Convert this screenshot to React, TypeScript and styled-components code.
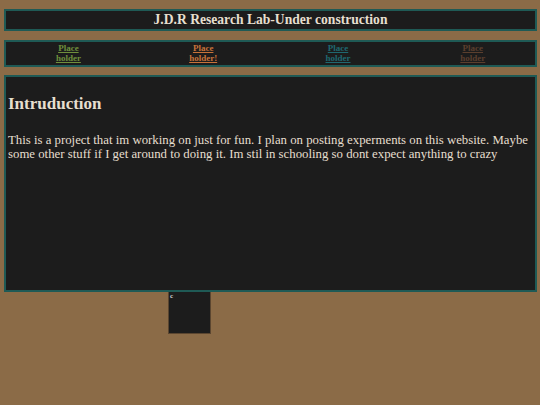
import styled, { createGlobalStyle } from 'styled-components';

const Global = createGlobalStyle`
  html, body {
    margin: 0;
    padding: 0;
    background-color: #8b6b47;
  }
  body {
    font-family: "Liberation Serif", "Times New Roman", serif;
    color: #e6dfcf;
  }
`

const Page = styled.div`
  padding: 9px 3px 0 4px;
  display: flex;
  flex-direction: column;
`
const Panel = styled.div`
  background-color: #1c1c1c;
  border: 2px solid #1f5a55;
  box-sizing: border-box;
`
const Header = styled(Panel)`
  height: 22px;
  display: flex;
  align-items: center;
  justify-content: center;
  font-weight: bold;
  font-size: 13.6px;
`
const Nav = styled(Panel)`
  margin-top: 9px;
  height: 27px;
  display: flex;
  align-items: center;
`
const NavRow = styled.div`
  margin-left: -5px;
  display: grid;
  grid-template-columns: repeat(4, 134.8px);
  align-items: center;
`
const NavLink = styled.a<{ $color: string }>`
  justify-self: center;
  text-align: center;
  font-size: 9px;
  line-height: 10px;
  font-weight: bold;
  color: ${(p) => p.$color};
  text-decoration: underline;
  width: 30px;
  margin-top: -1px;
`
const Main = styled(Panel)`
  margin-top: 8px;
  height: 217px;
  padding: 0 2px;
`
const Title = styled.h1`
  margin: 17px 0 0;
  font-size: 17px;
  line-height: 20px;
`
const Text = styled.p`
  margin: 19px 0 0;
  font-size: 12.8px;
  line-height: 14px;
`
const Below = styled.div`
  padding-left: 164px;
`
const Tile = styled.div`
  width: 43px;
  height: 42px;
  background-color: #1c1c1c;
  border-left: 1px solid #5b4630;
  border-right: 1px solid #5b4630;
  border-bottom: 1px solid #5b4630;
  box-sizing: border-box;
  font-size: 7px;
  line-height: 7px;
  font-weight: bold;
  padding: 1px 0 0 1px;
  color: #d0d0d0;
`

const links = [
  { label: 'Place holder', color: '#6f8f3c' },
  { label: 'Place holder!', color: '#c7733a' },
  { label: 'Place holder', color: '#1f6870' },
  { label: 'Place holder', color: '#5b3f2e' },
];

export default function App() {
  return (
    <>
      <Global />
      <Page>
        <Header>J.D.R Research Lab-Under construction</Header>
        <Nav>
          <NavRow>
            {links.map((l, i) => (
              <NavLink key={i} $color={l.color}>{l.label}</NavLink>
            ))}
          </NavRow>
        </Nav>
        <Main>
          <Title>Intruduction</Title>
          <Text>
            This is a project that im working on just for fun. I plan on posting experments on this website. Maybe
            some other stuff if I get around to doing it. Im stil in schooling so dont expect anything to crazy
          </Text>
        </Main>
        <Below>
          <Tile>c</Tile>
        </Below>
      </Page>
    </>
  );
}
